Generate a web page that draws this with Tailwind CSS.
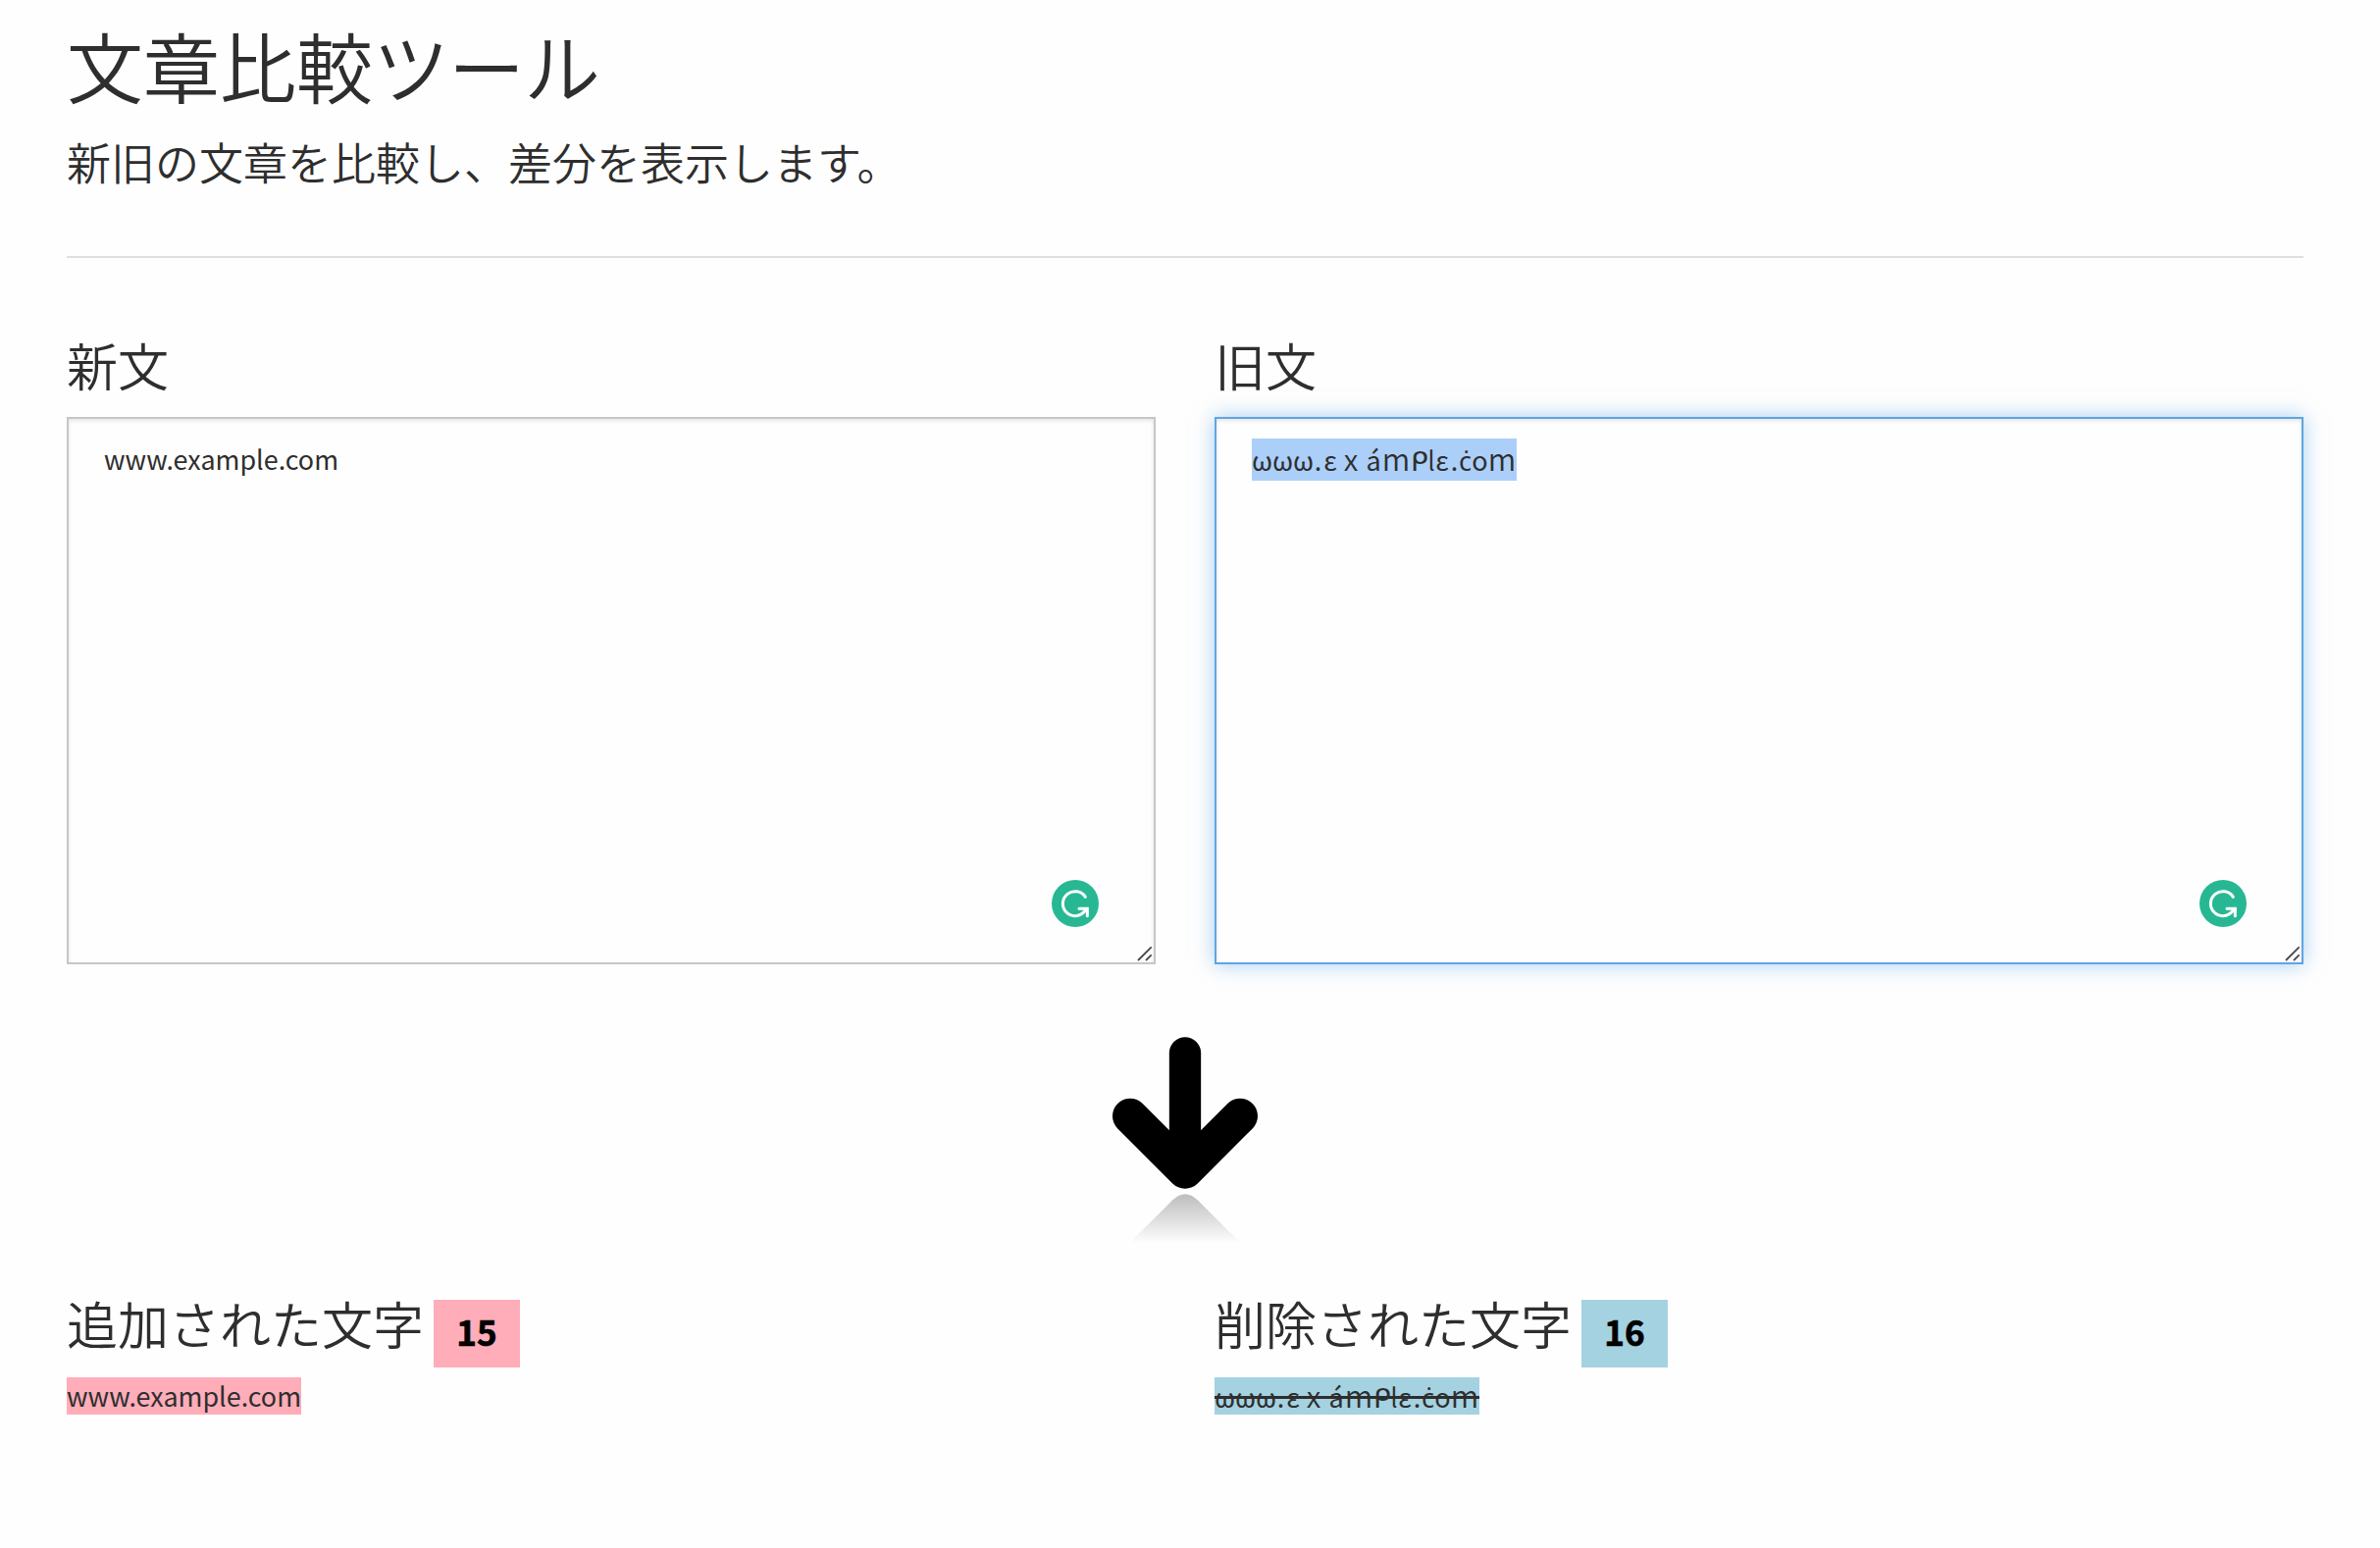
<!DOCTYPE html>
<html lang="ja">
<head>
<meta charset="utf-8">
<title>文章比較ツール</title>
<script src="https://cdn.jsdelivr.net/npm/@tailwindcss/browser@4"></script>
</head>
<body class="bg-[#fefefe] text-[#2e2e2e] font-['Noto_Sans_CJK_JP',sans-serif]">
<svg class="hidden">
  <symbol id="check" viewBox="0 0 144 144">
    <circle cx="72" cy="72" r="72" fill="#27b893"/>
    <g fill="none" stroke="#fff" stroke-width="9" stroke-linecap="round" stroke-linejoin="miter">
      <path d="M103 52A37.500 37.500 0 1 0 100 97L108 88"/>
      <path d="M84 88H109V110"/>
    </g>
  </symbol>
  <symbol id="grip" viewBox="0 0 48 48">
    <path d="M3 45L44 4M27 45L44 28" fill="none" stroke="#4a4a4a" stroke-width="5.500"/>
  </symbol>
</svg>
<main class="px-[68px] pt-[26px] w-[2416px]">
  <header class="border-b-2 border-[#dfdfdf] h-[237px] w-[2280px]">
    <h1 class="text-[78px] leading-20 font-[350]">文章比較<span class="tracking-[-1px]">ツール</span></h1>
    <p class="mt-[29px] text-[45px] leading-[60px] font-[350]">新旧の文章を比較し、差分を表示します。</p>
  </header>
  <section class="grid grid-cols-2 gap-[60px] w-[2280px] mt-[79px]">
    <div>
      <h2 class="text-[52px] leading-[60px] font-[350]">新文</h2>
      <div class="relative mt-[23px] h-[558px] border-2 border-[#c6c6c6] pl-9 pt-5 shadow-[inset_0_2px_4px_rgba(0,0,0,0.1)]">
        <span class="block text-[26.9px] leading-[41px]">www.example.com</span>
        <svg class="absolute right-14 bottom-9 size-12"><use href="#check"/></svg>
        <svg class="absolute right-[1px] bottom-[1px] size-4"><use href="#grip"/></svg>
      </div>
    </div>
    <div>
      <h2 class="text-[52px] leading-[60px] font-[350]">旧文</h2>
      <div class="relative mt-[23px] h-[558px] border-2 border-[#5fa5e3] pl-9 pt-5 shadow-[inset_0_2px_4px_rgba(0,0,0,0.1),0_0_20px_rgba(95,165,227,0.55)]">
        <div class="flex items-baseline w-[270px] h-[43px] bg-[#accff9] text-[27px] leading-[39px] *:flex *:justify-center *:shrink-0"><span class="w-[21px]">ω</span><span class="w-[21px]">ω</span><span class="w-[21px]">ω</span><span class="w-[9px]">.</span><span class="w-4">ε</span><span class="w-[26px] text-[30px] font-[350]">x</span><span class="w-5">á</span><span class="w-[26px] text-[31px] font-[350]">m</span><span class="w-[21px] text-[28px]">ᑭ</span><span class="w-1 font-[350]">l</span><span class="w-[18px]">ε</span><span class="w-[7px]">.</span><span class="w-[15px] font-['Noto_Sans']">ċ</span><span class="w-[15px]">o</span><span class="w-[30px] text-[31px] font-[350]">m</span></div>
        <svg class="absolute right-14 bottom-9 size-12"><use href="#check"/></svg>
        <svg class="absolute right-[1px] bottom-[1px] size-4"><use href="#grip"/></svg>
      </div>
    </div>
  </section>
  <div class="flex justify-center w-[2280px] mt-[47px]">
    <svg class="w-[216px] h-60" viewBox="0 0 648 720">
      <defs><linearGradient id="fade" x1="0" y1="562" x2="0" y2="712" gradientUnits="userSpaceOnUse"><stop stop-color="#bdbdbd"/><stop offset="1" stop-color="#fefefe"/></linearGradient></defs>
      <g fill="none" stroke="#000" stroke-linecap="round" stroke-linejoin="round">
        <path d="M324 130V480" stroke-width="97"/>
        <path d="M156 323L324 491L492 323" stroke-width="108"/>
      </g>
      <path d="M154 712L286 580Q324 544 362 580L494 712Z" fill="url(#fade)"/>
    </svg>
  </div>
  <section class="grid grid-cols-2 gap-[60px] w-[2280px] mt-[49px]">
    <div>
      <div class="flex h-[85px]">
        <h2 class="text-[52px] leading-[60px] font-[350] w-[374px] whitespace-nowrap">追加された文字</h2>
        <span class="mt-[6px] h-[69px] w-[88px] text-center bg-[#feadb9] text-black text-[35px] leading-[64px] font-bold [-webkit-text-stroke:0.7px_black]">15</span>
      </div>
      <span class="block w-[239px] h-[38px] bg-[#feadb9] text-[26.9px] leading-[37px] whitespace-nowrap">www.example.com</span>
    </div>
    <div>
      <div class="flex h-[85px]">
        <h2 class="text-[52px] leading-[60px] font-[350] w-[374px] whitespace-nowrap">削除された文字</h2>
        <span class="mt-[6px] h-[69px] w-[88px] text-center bg-[#a5d2e1] text-black text-[35px] leading-[64px] font-bold [-webkit-text-stroke:0.7px_black]">16</span>
      </div>
      <div class="relative w-[270px] h-[38px] bg-[#a5d2e1]">
        <del class="flex items-baseline no-underline text-[27px] leading-[35px] *:flex *:justify-center *:shrink-0"><span class="w-[21px]">ω</span><span class="w-[21px]">ω</span><span class="w-[21px]">ω</span><span class="w-[9px]">.</span><span class="w-4">ε</span><span class="w-[26px] text-[30px] font-[350]">x</span><span class="w-5">á</span><span class="w-[26px] text-[31px] font-[350]">m</span><span class="w-[21px] text-[28px]">ᑭ</span><span class="w-1 font-[350]">l</span><span class="w-[18px]">ε</span><span class="w-[7px]">.</span><span class="w-[15px] font-['Noto_Sans']">ċ</span><span class="w-[15px]">o</span><span class="w-[30px] text-[31px] font-[350]">m</span></del>
        <span class="absolute inset-x-0 top-[19px] h-[3px] bg-[#2e2e2e]"></span>
      </div>
    </div>
  </section>
</main>
</body>
</html>
